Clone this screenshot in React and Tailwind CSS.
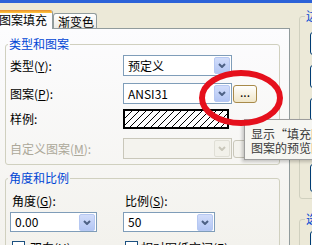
import React from "react";

function Chevron({ color }) {
  return (
    <svg width="8" height="5" viewBox="0 0 8 5">
      <path d="M1 1 L4 4 L7 1" fill="none" stroke={color} strokeWidth="2" />
    </svg>
  );
}

function DropButton({ disabled }) {
  if (disabled) {
    return (
      <div className="mr-[1px] flex h-[17px] w-[16px] items-center justify-center rounded-[2px] border border-[#e0dfd6] bg-[#f2f1ea]">
        <Chevron color="#c9c7ba" />
      </div>
    );
  }
  return (
    <div className="mr-[1px] flex h-[17px] w-[16px] items-center justify-center rounded-[2px] border border-[#b6c8f2] bg-linear-to-b from-[#d2ddfa] to-[#b3c6f4]">
      <Chevron color="#4d6185" />
    </div>
  );
}

function Combo({ value, className, disabled }) {
  return (
    <div
      className={`flex items-center border ${
        disabled ? "border-[#c9c7ba] bg-[#f4f3ee]" : "border-[#7f9db9] bg-white"
      } ${className}`}
    >
      <span className="flex-1 pl-[4px] text-[12px] leading-[12px] text-black">{value}</span>
      <DropButton disabled={disabled} />
    </div>
  );
}

function Hatch() {
  const lines = [];
  for (let x = -20; x < 120; x += 7) {
    lines.push(<line key={x} x1={x} y1="20" x2={x + 20} y2="0" stroke="#000" strokeWidth="1" />);
  }
  return (
    <div className="h-[20px] w-[106px] overflow-hidden border-2 border-black bg-white">
      <svg width="106" height="16" viewBox="0 0 106 16">
        {lines}
      </svg>
    </div>
  );
}

function Row({ label, children, className, muted }) {
  return (
    <div className={`flex items-center ${className}`}>
      <span className={`w-[115px] shrink-0 pl-[2px] leading-[12px] ${muted ? "text-[#aca899]" : "text-black"}`}>
        {label}
      </span>
      {children}
    </div>
  );
}

function SideButton({ className }) {
  return <div className={`ml-[10px] w-[30px] rounded-[3px] border border-[#003c74] bg-[#f8f8f4] ${className}`} />;
}

export default function App() {
  return (
    <div className="relative h-[245px] w-[312px] overflow-hidden bg-[#ece9d8] font-['Noto_Sans_CJK_SC','Noto_Sans',sans-serif] text-[12px] text-black">
      <div className="h-[3px] bg-[#2c62d8]" />
      <div className="flex">
        {/* tab control */}
        <div className="w-[290px] shrink-0">
          <div className="flex h-[25px] items-end">
            <div className="relative z-10 -mb-[1px] -ml-[6px] h-[19px] w-[59px] overflow-hidden rounded-t-[3px] border-x border-[#919b9c] bg-[#fcfcfe]">
              <div className="h-[3px] bg-linear-to-b from-[#e68b2c] to-[#ffc73c]" />
              <div className="pl-[4px] pt-[1px] leading-[12px]">图案填充</div>
            </div>
            <div className="h-[15px] w-[44px] rounded-t-[3px] border border-b-0 border-[#919b9c] bg-linear-to-b from-white to-[#ecebe6] pl-[4px] pt-[2px] leading-[12px]">
              渐变色
            </div>
          </div>
          <div className="h-[217px] border-r border-t border-[#919b9c] bg-linear-to-b from-[#fcfcfe] to-[#f3f2ed] pt-[9px]">
            <fieldset className="ml-[5px] w-[275px] rounded-[3px] border border-[#d0d0bf] px-[2px] pb-[5px]">
              <legend className="px-[1px] leading-[12px] text-[#0046d5]">类型和图案</legend>
              <Row label={<>类型(<u>Y</u>):</>} className="mt-[5px] h-[21px]">
                <Combo value="预定义" className="h-[21px] w-[109px]" />
              </Row>
              <Row label={<>图案(<u>P</u>):</>} className="mt-[7px] h-[21px]">
                <Combo value="ANSI31" className="h-[21px] w-[109px]" />
                <div className="ml-[1px] mt-[1px] flex h-[18px] w-[24px] items-center justify-center rounded-[3px] border border-[#a88a4a] bg-linear-to-b from-white to-[#f0e6c8] pb-[4px] leading-[12px]">
                  ...
                </div>
              </Row>
              <Row label="样例:" className="mt-[5px] h-[20px]">
                <Hatch />
              </Row>
              <Row label={<>自定义图案(<u>M</u>):</>} muted className="mt-[9px] h-[21px]">
                <Combo disabled value="" className="h-[21px] w-[109px]" />
                <div className="ml-[1px] h-[18px] w-[24px] rounded-[3px] border border-[#c9c7ba] bg-[#f4f3ee]" />
              </Row>
            </fieldset>
            <fieldset className="ml-[5px] mt-[7px] w-[275px] rounded-[3px] border border-[#d0d0bf] px-[2px] pb-[5px]">
              <legend className="px-[1px] leading-[12px] text-[#0046d5]">角度和比例</legend>
              <div className="mt-[11px] flex leading-[12px]">
                <span className="w-[115px] shrink-0 pl-[4px]">角度(<u>G</u>):</span>
                <span className="pl-[2px]">比例(<u>S</u>):</span>
              </div>
              <div className="mt-[5px] flex">
                <div className="w-[115px] shrink-0 pl-[2px]">
                  <Combo value="0.00" className="h-[20px] w-[87px]" />
                </div>
                <Combo value="50" className="h-[20px] w-[92px]" />
              </div>
              <div className="mt-[9px] flex items-center leading-[12px]">
                <div className="flex w-[115px] shrink-0 items-center pl-[4px]">
                  <div className="h-[13px] w-[13px] border border-[#1c5180] bg-white" />
                  <span className="ml-[5px]">双向(<u>U</u>)</span>
                </div>
                <div className="flex items-center pl-[2px]">
                  <div className="h-[13px] w-[13px] border border-[#1c5180] bg-white" />
                  <span className="ml-[3px]">相对图纸空间(<u>E</u>)</span>
                </div>
              </div>
            </fieldset>
          </div>
        </div>

        {/* right side groups */}
        <div className="flex-1">
          <fieldset className="ml-[9px] mt-[7px] w-[60px] rounded-[3px] border border-[#d0d0bf] pb-[6px]">
            <legend className="ml-[5px] px-[1px] leading-[12px] text-[#0046d5]">边界</legend>
            <SideButton className="mt-[10px] h-[23px]" />
            <SideButton className="mt-[10px] h-[23px]" />
            <SideButton className="mt-[10px] h-[23px]" />
            <SideButton className="mt-[10px] h-[23px]" />
            <SideButton className="mt-[10px] h-[28px]" />
          </fieldset>
          <fieldset className="ml-[9px] mt-[14px] w-[60px] rounded-[3px] border border-[#d0d0bf]">
            <legend className="ml-[5px] px-[1px] leading-[12px] text-[#0046d5]">选项</legend>
            <SideButton className="mt-[6px] h-[23px]" />
          </fieldset>
        </div>
      </div>

      {/* tooltip */}
      <div className="absolute left-[244px] top-[119px] h-[41px] w-[90px] border border-[#9c9c9c] bg-[#f6f6f2] pl-[6px] pt-[7px] leading-[14px] whitespace-nowrap text-[#3a3a3a] shadow-[-2px_2px_3px_rgba(0,0,0,0.2)]">
        <div>显示“填充图案”</div>
        <div>图案的预览图像</div>
      </div>

      {/* red annotation */}
      <svg className="pointer-events-none absolute left-0 top-0" width="312" height="245">
        <ellipse cx="241" cy="98" rx="39" ry="25" fill="none" stroke="#e5101c" strokeWidth="6" />
      </svg>
    </div>
  );
}
